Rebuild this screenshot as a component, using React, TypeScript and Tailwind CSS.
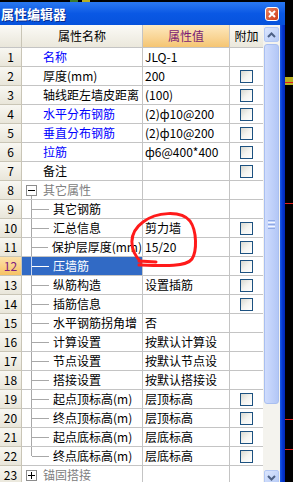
import React from "react";

type Kind = "top" | "group" | "child" | "last";
type Row = { n: number; name: string; val?: string; kind: Kind; blue?: boolean; cb?: boolean; open?: boolean };

const rows: Row[] = [
  { n: 1, name: "名称", val: "JLQ-1", kind: "top", blue: true },
  { n: 2, name: "厚度(mm)", val: "200", kind: "top", cb: true },
  { n: 3, name: "轴线距左墙皮距离", val: "(100)", kind: "top", cb: true },
  { n: 4, name: "水平分布钢筋", val: "(2)ф10@200", kind: "top", blue: true, cb: true },
  { n: 5, name: "垂直分布钢筋", val: "(2)ф10@200", kind: "top", blue: true, cb: true },
  { n: 6, name: "拉筋", val: "ф6@400*400", kind: "top", blue: true, cb: true },
  { n: 7, name: "备注", kind: "top", cb: true },
  { n: 8, name: "其它属性", kind: "group", open: true },
  { n: 9, name: "其它钢筋", kind: "child" },
  { n: 10, name: "汇总信息", val: "剪力墙", kind: "child", cb: true },
  { n: 11, name: "保护层厚度(mm)", val: "15/20", kind: "child", cb: true },
  { n: 12, name: "压墙筋", kind: "child", cb: true },
  { n: 13, name: "纵筋构造", val: "设置插筋", kind: "child", cb: true },
  { n: 14, name: "插筋信息", kind: "child", cb: true },
  { n: 15, name: "水平钢筋拐角增", val: "否", kind: "child" },
  { n: 16, name: "计算设置", val: "按默认计算设", kind: "child" },
  { n: 17, name: "节点设置", val: "按默认节点设", kind: "child" },
  { n: 18, name: "搭接设置", val: "按默认搭接设", kind: "child" },
  { n: 19, name: "起点顶标高(m)", val: "层顶标高", kind: "child", cb: true },
  { n: 20, name: "终点顶标高(m)", val: "层顶标高", kind: "child", cb: true },
  { n: 21, name: "起点底标高(m)", val: "层底标高", kind: "child", cb: true },
  { n: 22, name: "终点底标高(m)", val: "层底标高", kind: "last", cb: true },
  { n: 23, name: "锚固搭接", kind: "group" },
];

const SELECTED = 12;

function Check() {
  return <div className="w-[13px] h-[13px] border border-[#1c5180] bg-gradient-to-br from-[#d8d8d0] via-[#f4f4f0] to-white" />;
}

function NameCell({ row, sel }: { row: Row; sel: boolean }) {
  const line = sel ? "bg-[#c8d6f0]" : "bg-[#a8a8a8]";
  const color = sel ? "text-white" : row.blue ? "text-[#0000ff]" : "text-black";
  if (row.kind === "top") {
    return <div className={`flex items-center h-full pl-[21px] ${color}`}>{row.name}</div>;
  }
  if (row.kind === "group") {
    return (
      <div className="flex h-full">
        <div className="w-[4px]" />
        <div className="w-[11px] flex flex-col items-center">
          <div className="flex-1" />
          <div className="w-[11px] h-[11px] border border-[#8c8c8c] bg-white flex items-center justify-center">
            <svg width="7" height="7" viewBox="0 0 7 7">
              <rect x="0" y="3" width="7" height="1" fill="#000" />
              {!row.open && <rect x="3" y="0" width="1" height="7" fill="#000" />}
            </svg>
          </div>
          <div className={`flex-1 w-px ${row.open ? line : ""}`} />
        </div>
        <div className="ml-[6px] flex items-center text-[#808080]">{row.name}</div>
      </div>
    );
  }
  return (
    <div className="flex h-full">
      <div className="w-[9px]" />
      <div className="w-px flex flex-col">
        <div className={`${row.kind === "last" ? "h-1/2" : "flex-1"} ${line}`} />
      </div>
      <div className="w-[17px] flex items-center">
        <div className={`h-px w-full ${sel ? "bg-white" : line}`} />
      </div>
      <div className={`ml-[4px] flex items-center whitespace-nowrap ${color}`}>{row.name}</div>
    </div>
  );
}

function Chevron({ down }: { down?: boolean }) {
  return (
    <svg width="9" height="6" viewBox="0 0 9 6">
      <path d={down ? "M1 1 L4.5 4.5 L8 1" : "M1 5 L4.5 1.5 L8 5"} stroke="#4d6185" strokeWidth="2" fill="none" />
    </svg>
  );
}

export default function App() {
  return (
    <div className="w-[293px] h-[482px] overflow-hidden bg-black relative font-['Noto_Sans_CJK_SC',sans-serif] text-[12px] leading-[18px]">
      {/* top strip of the desktop behind */}
      <div className="h-[2px] flex">
        <div className="w-[70px]" />
        <div className="w-[8px] bg-[#3a7a2a]" />
        <div className="w-[4px]" />
        <div className="w-[8px] bg-[#b8b020]" />
      </div>

      <div className="flex h-[480px]">
        <div className="w-[285px] flex flex-col">
          {/* title bar */}
          <div className="h-[23px] shrink-0 flex items-center justify-between bg-gradient-to-b from-[#2a78f0] via-[#0a58e4] to-[#0652dc]">
            <span className="pl-[1px] text-white font-bold text-[13px] [text-shadow:1px_1px_0_#0a2a8a]">属性编辑器</span>
            <div className="mr-[6px] w-[14px] h-[14px] rounded-[3px] border border-white bg-gradient-to-br from-[#e8805c] to-[#cf3a12] flex items-center justify-center">
              <svg width="8" height="8" viewBox="0 0 8 8">
                <path d="M1 1 L7 7 M7 1 L1 7" stroke="#fff" strokeWidth="2" />
              </svg>
            </div>
          </div>

          <div className="flex flex-1 min-h-0">
            {/* property grid */}
            <div className="w-[263px] bg-white">
              <div className="grid grid-cols-[22px_121px_87px_33px] h-[23px] border-b border-[#c4c4c4]">
                <div className="border-r border-[#c9c5b6] bg-gradient-to-b from-[#fbfaf6] to-[#e9e6da]" />
                <div className="border-r border-[#c4c4c4] bg-gradient-to-b from-[#fbfaf6] to-[#ebe8dc] flex items-center justify-center text-black">属性名称</div>
                <div className="border-r border-[#c4c4c4] bg-gradient-to-b from-[#fde9bf] to-[#f5c572] flex items-center justify-center text-[#7a1a74]">属性值</div>
                <div className="bg-gradient-to-b from-[#fbfaf6] to-[#ebe8dc] flex items-center justify-center text-black">附加</div>
              </div>
              {rows.map((r) => {
                const sel = r.n === SELECTED;
                return (
                  <div key={r.n} className="grid grid-cols-[22px_121px_87px_33px] h-[19px]">
                    <div
                      className={`border-r border-b border-[#c9c5b6] flex items-center justify-center ${
                        sel ? "bg-gradient-to-b from-[#fde2aa] to-[#f6c264] text-[#80207f]" : "bg-gradient-to-b from-[#f8f7f2] to-[#e9e6da] text-black"
                      }`}
                    >
                      {r.n}
                    </div>
                    <div className={`border-r border-b border-[#c4c4c4] overflow-hidden ${sel ? "bg-[#316ac5]" : ""}`}>
                      <NameCell row={r} sel={sel} />
                    </div>
                    <div className="border-r border-b border-[#c4c4c4] overflow-hidden whitespace-nowrap pl-[2px] flex items-center text-black">
                      {r.val}
                    </div>
                    <div className="border-b border-[#c4c4c4] flex items-center justify-center">{r.cb && <Check />}</div>
                  </div>
                );
              })}
            </div>

            {/* scrollbar */}
            <div className="w-[17px] shrink-0 bg-[#f4f3ee] flex flex-col items-center">
              <div className="mt-[2px] w-[15px] h-[15px] shrink-0 rounded-[2px] border border-[#b4c8f4] bg-gradient-to-br from-[#dce6fd] to-[#b6cbf7] flex items-center justify-center">
                <Chevron />
              </div>
              <div className="mt-[2px] w-[15px] h-[360px] shrink-0 rounded-[3px] border border-[#a9bff0] bg-gradient-to-r from-[#cfdcfd] to-[#b3c7f6] flex flex-col items-center justify-center gap-[1px]">
                <div className="w-[7px] h-px bg-[#8fa9e4]" />
                <div className="w-[7px] h-px bg-[#f4f7fe]" />
                <div className="w-[7px] h-px bg-[#8fa9e4]" />
                <div className="w-[7px] h-px bg-[#f4f7fe]" />
                <div className="w-[7px] h-px bg-[#8fa9e4]" />
              </div>
              <div className="h-[66px] shrink-0" />
              <div className="w-[15px] h-[15px] shrink-0 rounded-[2px] border border-[#b4c8f4] bg-gradient-to-br from-[#dce6fd] to-[#b6cbf7] flex items-center justify-center">
                <Chevron down />
              </div>
            </div>

            {/* window border */}
            <div className="w-[5px] shrink-0 bg-gradient-to-r from-[#1a5ae8] via-[#0638d0] to-[#0028b8]" />
          </div>
        </div>

        {/* desktop behind, right edge */}
        <div className="flex-1 relative">
          <div className="absolute left-0 top-[75px] w-full h-[8px] bg-[#b8b020]" />
          <div className="absolute left-0 top-[80px] w-full h-px bg-[#e02020]" />
          <div className="absolute left-0 top-[201px] w-full h-px bg-[#e02020]" />
          <div className="absolute left-0 top-[417px] w-full h-px bg-[#e02020]" />
          <div className="absolute left-0 top-[447px] w-full h-px bg-[#e02020]" />
        </div>
      </div>

      {/* red hand-drawn annotation */}
      <svg className="absolute left-0 top-0 pointer-events-none" width="293" height="482" viewBox="0 0 293 482">
        <path
          d="M141 262 C129 250, 128 233, 143 222 C156 212, 181 210, 190 221 C197 231, 197 251, 192 259 C186 267, 165 266, 139 265 M139 261 L156 262"
          stroke="#ff1a1a"
          strokeWidth="3"
          fill="none"
          strokeLinecap="round"
        />
      </svg>
    </div>
  );
}
